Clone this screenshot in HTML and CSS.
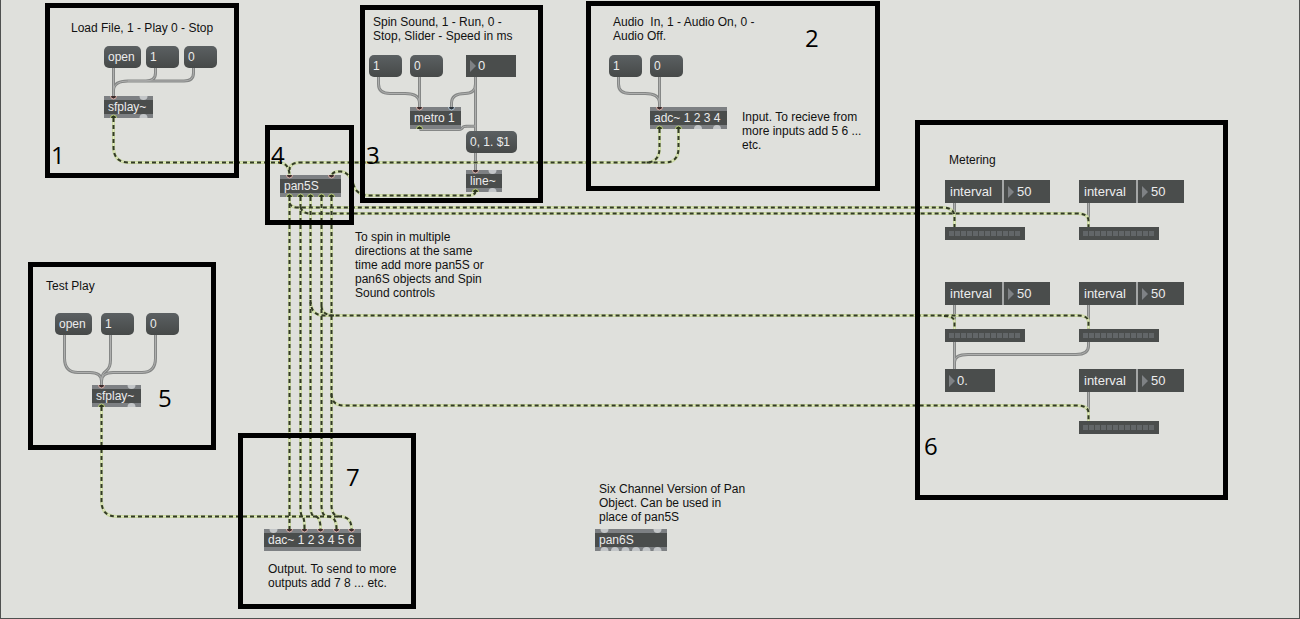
FILE: index.html
```html
<!DOCTYPE html>
<html lang="en">
<head>
<meta charset="utf-8">
<title>Spatial panning patch</title>
<link rel="stylesheet" href="styles.css">
</head>
<body>
<main class="canvas">
  <svg class="layer" aria-hidden="true">
    <defs>
      <g id="control">
        <path d="M113.5 68V97M155.5 68V73Q155.5 81 146 81H128Q114 81 113.5 90M193.5 68V73Q193.5 81 184 81H128"/>
        <path d="M378.5 77V84Q378.5 93.500 390 93.500H405Q419.500 93.500 419.500 103M419.500 77V108M475.500 77V131M475.500 84Q475.500 93.500 465 93.500Q451.500 93.500 451.500 103V108M419.500 129.500H459Q462 129.500 463 127Q464 126 475.500 126M475.500 153V171"/>
        <path d="M618.500 77V84Q618.500 93.500 630 93.500H645Q659.500 93.500 659.500 103M659.500 77V108"/>
        <path d="M64.500 335V358Q64.500 372.500 78 372.500H90Q101.500 372.500 101.500 381V386M110.500 335V360Q110.500 368 106 371Q101.500 374 101.500 381M155.500 335V358Q155.500 372.500 142 372.500H113Q101.500 372.500 101.500 381"/>
        <path d="M954.500 203V227M1088.500 203V227M954.500 305V329M1088.500 305V329M1088.500 392V421M954.500 342V369M1088.500 342V346Q1088.500 354.500 1076 354.500H968Q954.500 354.500 954.500 362"/>
      </g>
      <g id="signal">
        <path d="M113.500 118V147Q113.500 162.500 129 162.500H278Q289.500 162.500 289.500 176"/>
        <path d="M659.500 129V148Q659.500 162.500 646 162.500H301Q289.500 162.500 289.500 170"/>
        <path d="M678.500 129V148Q678.500 162.500 665 162.500H646"/>
        <path d="M475.500 191Q475.500 195.500 468 195.500H369Q360 195.500 355 189Q350 172 341 171.500Q331.500 171 331.500 177"/>
        <path d="M289.500 197V529"/>
        <path d="M300.500 197V507Q300.500 516.500 303 517Q304.500 519 304.500 529"/>
        <path d="M310.500 197V505Q310.500 516.500 315 516.500Q320.500 516.500 320.500 529"/>
        <path d="M321.500 197V505Q321.500 516.500 328 516.500Q336.500 516.500 336.500 529"/>
        <path d="M331.500 197V505Q331.500 516.500 340 516.500Q351.500 516.500 351.500 529"/>
        <path d="M289.500 203Q291 207.500 298 207.500H942Q954.500 207.500 954.500 217V227"/>
        <path d="M300.500 207Q302 213.500 310 213.500H1077Q1088.500 213.500 1088.500 221V227"/>
        <path d="M310.500 300Q310.500 315.500 324 315.500H1077Q1088.500 315.500 1088.500 322V329"/>
        <path d="M321.500 306Q322 315.500 334 315.500M944 316Q954.500 316 954.500 322V329"/>
        <path d="M331.500 394Q331.500 405.500 344 405.500H1077Q1088.500 405.500 1088.500 413V421"/>
        <path d="M101.500 407V501Q101.500 516.500 117 516.500H342"/>
      </g>
    </defs>
    <use href="#control" class="control-edge"/>
    <use href="#control" class="control-core"/>
    <use href="#signal" class="signal-edge"/>
    <use href="#signal" class="signal-gap"/>
    <use href="#signal" class="signal-core"/>
  </svg>

  <div class="frame frame-load"></div>
  <div class="frame frame-spin"></div>
  <div class="frame frame-audio"></div>
  <div class="frame frame-pan"></div>
  <div class="frame frame-test"></div>
  <div class="frame frame-meter"></div>
  <div class="frame frame-output"></div>

  <p class="note note-load">Load File, 1 - Play 0 - Stop</p>
  <button class="message load-open">open</button>
  <button class="message load-1">1</button>
  <button class="message load-0">0</button>
  <div class="object load-sfplay">sfplay~</div>
  <b class="mark mark-1">1</b>

  <p class="note note-audio">Audio&nbsp; In, 1 - Audio On, 0 -<br>Audio Off.</p>
  <button class="message audio-1">1</button>
  <button class="message audio-0">0</button>
  <div class="object audio-adc">adc~ 1 2 3 4</div>
  <p class="note note-input">Input. To recieve from<br>more inputs add 5 6 ...<br>etc.</p>
  <b class="mark mark-2">2</b>

  <p class="note note-spin">Spin Sound, 1 - Run, 0 -<br>Stop, Slider - Speed in ms</p>
  <button class="message spin-1">1</button>
  <button class="message spin-0">0</button>
  <label class="number spin-speed"><input type="text" value="0" aria-label="Speed in ms"></label>
  <div class="object spin-metro">metro 1</div>
  <button class="message spin-ramp">0, 1. $1</button>
  <div class="object spin-line">line~</div>
  <b class="mark mark-3">3</b>

  <div class="object pan-5">pan5S</div>
  <b class="mark mark-4">4</b>
  <p class="note note-multi">To spin in multiple<br>directions at the same<br>time add more pan5S or<br>pan6S objects and Spin<br>Sound controls</p>

  <p class="note note-test">Test Play</p>
  <button class="message test-open">open</button>
  <button class="message test-1">1</button>
  <button class="message test-0">0</button>
  <div class="object test-sfplay">sfplay~</div>
  <b class="mark mark-5">5</b>

  <p class="note note-meter">Metering</p>
  <label class="attribute col-a row-1"><span class="name">interval</span><span class="number"><input type="text" value="50"></span></label>
  <label class="attribute col-b row-1"><span class="name">interval</span><span class="number"><input type="text" value="50"></span></label>
  <label class="attribute col-a row-2"><span class="name">interval</span><span class="number"><input type="text" value="50"></span></label>
  <label class="attribute col-b row-2"><span class="name">interval</span><span class="number"><input type="text" value="50"></span></label>
  <label class="attribute col-b row-3"><span class="name">interval</span><span class="number"><input type="text" value="50"></span></label>
  <div class="meter col-a meter-1"><i></i></div>
  <div class="meter col-b meter-1"><i></i></div>
  <div class="meter col-a meter-2"><i></i></div>
  <div class="meter col-b meter-2"><i></i></div>
  <div class="meter col-b meter-3"><i></i></div>
  <label class="number large col-a row-3"><input type="text" value="0." aria-label="Level"></label>
  <b class="mark mark-6">6</b>

  <div class="object out-dac">dac~ 1 2 3 4 5 6</div>
  <p class="note note-output">Output. To send to more<br>outputs add 7 8 ... etc.</p>
  <b class="mark mark-7">7</b>

  <p class="note note-six">Six Channel Version of Pan<br>Object. Can be used in<br>place of pan5S</p>
  <div class="object pan-6">pan6S</div>

  <svg class="layer" aria-hidden="true">
    <defs>
      <g id="in"><path class="hot" d="M-3 0A3 3 0 0 0 3 0"/></g>
      <g id="in-cold"><path class="cold" d="M-3 0A3 3 0 0 0 3 0"/></g>
      <g id="out"><path class="live" d="M-3 0A3 3 0 0 1 3 0"/></g>
      <g id="free-in"><path class="free" d="M-4 0A4 4 0 0 0 4 0Z"/></g>
      <g id="free-out"><path class="free" d="M-4 0A4 4 0 0 1 4 0Z"/></g>
    </defs>
    <use href="#in" x="113.500" y="96"/><use href="#free-in" x="143.500" y="96"/>
    <use href="#out" x="113.500" y="118"/><use href="#free-out" x="143.500" y="118"/>
    <use href="#in" x="419.500" y="107"/><use href="#in-cold" x="451.500" y="107"/><use href="#out" x="419.500" y="129"/>
    <use href="#in" x="475.500" y="170"/><use href="#free-in" x="492.500" y="170"/>
    <use href="#out" x="475.500" y="192"/><use href="#free-out" x="492.500" y="192"/>
    <use href="#in" x="659.500" y="107"/><use href="#out" x="659.500" y="129"/><use href="#out" x="678.500" y="129"/>
    <use href="#free-out" x="698" y="129"/><use href="#free-out" x="717" y="129"/>
    <use href="#in" x="289.500" y="175"/><use href="#in" x="331.500" y="175"/>
    <use href="#out" x="289.500" y="197"/><use href="#out" x="300.500" y="197"/><use href="#out" x="310.500" y="197"/><use href="#out" x="321.500" y="197"/><use href="#out" x="331.500" y="197"/>
    <use href="#in" x="101.500" y="385"/><use href="#free-in" x="131.500" y="385"/>
    <use href="#out" x="101.500" y="407"/><use href="#free-out" x="131.500" y="407"/>
    <use href="#free-in" x="273.500" y="529"/><use href="#in" x="289.500" y="529"/><use href="#in" x="304.500" y="529"/><use href="#in" x="320.500" y="529"/><use href="#in" x="336.500" y="529"/><use href="#in" x="351.500" y="529"/>
    <use href="#free-in" x="604.500" y="529"/><use href="#free-in" x="657.500" y="529"/>
    <use href="#free-out" x="604.500" y="551"/><use href="#free-out" x="615" y="551"/><use href="#free-out" x="625.500" y="551"/><use href="#free-out" x="636" y="551"/><use href="#free-out" x="646.500" y="551"/><use href="#free-out" x="657.500" y="551"/>
  </svg>
</main>
</body>
</html>
```
FILE: styles.css
```css
* { box-sizing: border-box; }

body {
  margin: 0;
  font: 12px/14px "Liberation Sans", Arial, sans-serif;
  color: #111;
}

.canvas {
  position: relative;
  min-height: 100vh;
  overflow: hidden;
  background: #dfe0dc;
  border: solid #4f5150;
  border-width: 0 1px 1px 0;
  box-shadow: inset 1px 0 #4f5150;
}

.canvas > * { position: absolute; }

/* Patch cords and ports */
.layer {
  left: 0;
  top: 0;
  width: 100%;
  height: 100%;
  fill: none;
  pointer-events: none;
}
.control-edge { stroke: #858786; stroke-width: 3; }
.control-core { stroke: #aeafae; stroke-width: 1; }
.signal-edge { stroke: #cbd9a4; stroke-width: 3; }
.signal-gap { stroke: #e2eabf; stroke-width: 1; }
.signal-core { stroke: #323a26; stroke-width: 2; stroke-dasharray: 4 3; }
.hot { fill: #3b2b2b; stroke: #dfb5ae; }
.cold { fill: #2b333b; stroke: #b4c8d8; }
.live { fill: #2c3620; stroke: #bfd27c; }
.free { fill: #c3c6c8; }

/* Numbered frames */
.frame { border: 5px solid #000; }
.frame-load { left: 45px; top: 3px; width: 194px; height: 175px; }
.frame-spin { left: 360px; top: 5px; width: 183px; height: 198px; }
.frame-audio { left: 586px; top: 1px; width: 294px; height: 190px; }
.frame-pan { left: 265px; top: 125px; width: 89px; height: 100px; }
.frame-test { left: 28px; top: 262px; width: 188px; height: 188px; }
.frame-meter { left: 915px; top: 120px; width: 313px; height: 380px; }
.frame-output { left: 238px; top: 433px; width: 178px; height: 176px; }

.mark {
  font: 24px/24px "Open Sans", "Noto Sans", sans-serif;
  color: #000;
}
.mark-1 { left: 51px; top: 143px; }
.mark-2 { left: 805px; top: 26px; }
.mark-3 { left: 366px; top: 143px; }
.mark-4 { left: 271px; top: 143px; }
.mark-5 { left: 158px; top: 386px; }
.mark-6 { left: 924px; top: 434px; }
.mark-7 { left: 346px; top: 465px; }

/* Comments */
.note { margin: 0; white-space: nowrap; }
.note-load { left: 71px; top: 21px; }
.note-spin { left: 373px; top: 15px; }
.note-audio { left: 613px; top: 15px; }
.note-input { left: 742px; top: 110px; }
.note-multi { left: 355px; top: 230px; }
.note-test { left: 46px; top: 279px; }
.note-meter { left: 949px; top: 153px; }
.note-output { left: 268px; top: 562px; }
.note-six { left: 599px; top: 482px; }

/* Message boxes */
.message {
  width: 33px;
  height: 22px;
  padding: 0 4px;
  border: 0;
  border-radius: 5px;
  background: linear-gradient(#5b6062, #464948);
  color: #ececec;
  font: inherit;
  text-align: left;
  white-space: nowrap;
}
.load-open { left: 104px; top: 46px; width: 37px; }
.load-1 { left: 146px; top: 46px; }
.load-0 { left: 184px; top: 46px; }
.spin-1 { left: 369px; top: 55px; }
.spin-0 { left: 410px; top: 55px; }
.spin-ramp { left: 466px; top: 131px; width: 51px; }
.audio-1 { left: 609px; top: 55px; }
.audio-0 { left: 650px; top: 55px; }
.test-open { left: 55px; top: 313px; width: 37px; }
.test-1 { left: 101px; top: 313px; }
.test-0 { left: 146px; top: 313px; }

/* Object boxes */
.object {
  padding: 0 4px;
  border: solid #7d8083;
  border-width: 4px 0;
  background: #4a4d4c;
  color: #ececec;
  white-space: nowrap;
}
.load-sfplay { left: 104px; top: 96px; width: 49px; }
.spin-metro { left: 410px; top: 107px; width: 51px; }
.spin-line { left: 466px; top: 170px; width: 36px; }
.audio-adc { left: 650px; top: 107px; width: 77px; }
.pan-5 { left: 280px; top: 175px; width: 61px; }
.test-sfplay { left: 92px; top: 385px; width: 49px; }
.out-dac { left: 264px; top: 529px; width: 97px; }
.pan-6 { left: 595px; top: 529px; width: 72px; }

/* Number boxes */
.number {
  display: flex;
  align-items: center;
  gap: 2px;
  height: 22px;
  padding-left: 4px;
  background: #4a4d4c;
  color: #ececec;
  font-size: 13px;
}
.number::before {
  content: "";
  border: solid transparent;
  border-width: 6px 0 6px 6px;
  border-left-color: #7f8285;
}
.number input {
  flex: 1;
  width: 0;
  min-width: 0;
  padding: 0;
  border: 0;
  background: none;
  color: inherit;
  font: inherit;
}
.spin-speed { left: 466px; top: 55px; width: 50px; }
.large { width: 50px; height: 23px; }

/* Attribute boxes */
.attribute {
  display: flex;
  gap: 2px;
  width: 105px;
  height: 23px;
  background: #a5a7a7;
  color: #ececec;
  font-size: 13px;
  line-height: 23px;
}
.attribute .name { flex: none; width: 57px; padding-left: 5px; background: #4a4d4c; }
.attribute .number { flex: 1; min-width: 0; height: 100%; gap: 3px; }

/* Level meters */
.meter { width: 80px; height: 13px; padding: 4px; background: #4a4d4c; }
.meter i {
  display: block;
  height: 5px;
  background: repeating-linear-gradient(90deg, #626668 0 5px, #4a4d4c 5px 6px);
}

.col-a { left: 945px; }
.col-b { left: 1079px; }
.row-1 { top: 180px; }
.row-2 { top: 282px; }
.row-3 { top: 369px; }
.meter-1 { top: 227px; }
.meter-2 { top: 329px; }
.meter-3 { top: 421px; }
```
